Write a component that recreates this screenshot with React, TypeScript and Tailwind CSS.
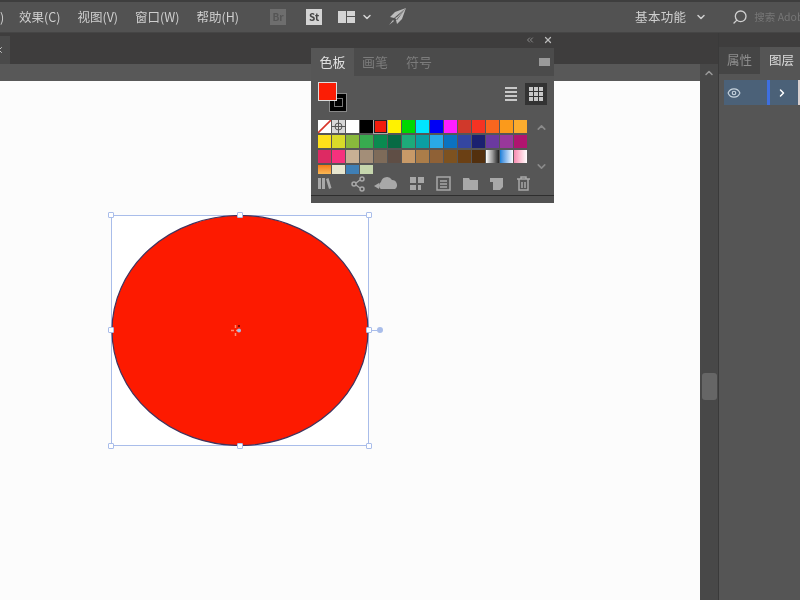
import { ChevronDown, ChevronRight, ChevronUp, ChevronsLeft, Eye, Search, X } from "lucide-react";

const cjk = { fontFamily: '"Noto Sans CJK SC", "Liberation Sans", sans-serif' };

const swatchRows = [
  ["none", "reg", "#ffffff", "#000000", "sel", "#fff200", "#00d800", "#00e5ff", "#0000f5", "#ff1eff", "#d0392b", "#f53323", "#f9661f", "#fb9a1b", "#fbac2e"],
  ["#fde01a", "#d9da29", "#8ab93c", "#38aa4f", "#0a8a50", "#076a44", "#1dab7a", "#0b9ea3", "#29a9e6", "#0b72c0", "#3446a1", "#1b2170", "#6b3aa0", "#99389b", "#b0146f"],
  ["#dd2a63", "#f6317d", "#c8b094", "#a38e78", "#7e6b59", "#5f4e45", "#c89a68", "#ab7d49", "#8f6136", "#7d5220", "#6b4014", "#53300e"],
];

const Swatch = ({ kind }: { kind: string }) => {
  if (kind === "none") {
    return (
      <svg className="w-[13px] h-[13px] bg-white" viewBox="0 0 13 13">
        <line x1="0" y1="13" x2="13" y2="0" stroke="#d8352a" strokeWidth="1.6" />
      </svg>
    );
  }
  if (kind === "reg") {
    return (
      <svg className="w-[13px] h-[13px] bg-[#d8d8d8]" viewBox="0 0 13 13" fill="none" stroke="#555">
        <circle cx="6.5" cy="6.5" r="3.5" />
        <path d="M0 6.5h13M6.5 0v13" />
      </svg>
    );
  }
  if (kind === "sel") {
    return (
      <div className="w-[13px] h-[13px] bg-[#f31c0c] border border-[#222] outline outline-1 outline-[#aaa]" />
    );
  }
  return <div className="w-[13px] h-[13px]" style={{ background: kind }} />;
};

const Handle = ({ className }: { className: string }) => (
  <div className={`absolute w-[6px] h-[6px] rounded-[1px] bg-white border border-[#a9bdea] ${className}`} />
);

const MenuItem = ({ label }: { label: string }) => (
  <span className="shrink-0 text-[12.5px] text-[#cfcfcf] whitespace-nowrap">{label}</span>
);

const iconClass = "w-[17px] h-[17px] text-[#a8a8a8]";

const SwatchesPanel = () => (
  <div className="absolute left-[311px] top-[48px] w-[243px] h-[155px] bg-[#565656] flex flex-col blur-[0.4px]" style={cjk}>
    <div className="h-[29px] bg-[#4b4b4b] flex items-center pr-[4px]">
      <div className="w-[43px] h-full bg-[#565656] flex items-center justify-center text-[13px] text-[#e0e0e0]">色板</div>
      <span className="ml-[8px] text-[13px] text-[#7c7c7c]">画笔</span>
      <span className="ml-[18px] text-[13px] text-[#7c7c7c]">符号</span>
      <div className="ml-auto w-[11px] h-[8px] bg-[#9a9a9a]" />
    </div>
    <div className="h-[36px] mt-[6px] pl-[7px] pr-[7px] flex justify-between">
      <div className="relative w-[36px] h-[30px]">
        <div className="absolute left-[11px] top-[11px] w-[18px] h-[19px] bg-black border border-[#888] flex items-center justify-center">
          <div className="w-[9px] h-[9px] border border-[#777]" />
        </div>
        <div className="absolute left-0 top-0 w-[19px] h-[19px] bg-[#fb1d05] border border-[#ddd]" />
      </div>
      <div className="flex items-start gap-[3px]">
        <div className="w-[22px] h-[22px] flex flex-col justify-center items-center gap-[2px] mt-[1px]">
          <div className="w-[12px] h-[2px] bg-[#c8c8c8]" />
          <div className="w-[12px] h-[2px] bg-[#c8c8c8]" />
          <div className="w-[12px] h-[2px] bg-[#c8c8c8]" />
          <div className="w-[12px] h-[2px] bg-[#c8c8c8]" />
        </div>
        <div className="w-[22px] h-[22px] bg-[#333] grid grid-cols-3 gap-[1px] p-[4px] mt-[1px]">
          {Array.from({ length: 9 }).map((_, i) => (
            <div key={i} className="bg-[#c8c8c8]" />
          ))}
        </div>
      </div>
    </div>
    <div className="flex pl-[7px] mt-[2px]">
      <div className="w-[210px] h-[54px] overflow-hidden flex flex-col gap-[2px]">
        {swatchRows.slice(0, 2).map((row, r) => (
          <div key={r} className="flex gap-[1px]">
            {row.map((c, i) => (
              <Swatch key={i} kind={c} />
            ))}
          </div>
        ))}
        <div className="flex gap-[1px]">
          {swatchRows[2].map((c, i) => (
            <Swatch key={i} kind={c} />
          ))}
          <div className="w-[13px] h-[13px] bg-gradient-to-r from-white via-[#999] to-[#222]" />
          <div className="w-[13px] h-[13px] bg-gradient-to-r from-[#0b7fd8] to-white" />
          <div className="w-[13px] h-[13px] bg-gradient-to-r from-[#f58ab0] to-white" />
        </div>
        <div className="flex gap-[1px]">
          <div className="w-[13px] h-[13px] bg-gradient-to-t from-[#f9d26a] to-[#f47a10]" />
          <div className="w-[13px] h-[13px] bg-[#e7e6cf]" />
          <div className="w-[13px] h-[13px] bg-[#3f7fb5]" />
          <div className="w-[13px] h-[13px] bg-[#c5d6ad]" />
        </div>
      </div>
      <div className="ml-[3px] w-[20px] flex flex-col justify-between items-center py-[1px] h-[54px]">
        <ChevronUp className="w-[13px] h-[13px] text-[#8a8a8a]" strokeWidth={3} />
        <ChevronDown className="w-[13px] h-[13px] text-[#8a8a8a]" strokeWidth={3} />
      </div>
    </div>
    <div className="h-[24px] flex items-center pl-[5px] mt-[-2px]">
      <svg className={iconClass} viewBox="0 0 17 17" fill="#a8a8a8">
        <path d="M2 3h3v11H2zM6 3h3v11H6zM10 4l2.5-1 3 10-2.5 1z" />
      </svg>
      <svg className={`${iconClass} ml-[17px]`} viewBox="0 0 17 17" fill="none" stroke="#a8a8a8" strokeWidth="1.5">
        <circle cx="4" cy="9" r="2" />
        <circle cx="12" cy="4" r="2" />
        <circle cx="12" cy="14" r="2" />
        <path d="M6 8l4-3M6 10l4 3" />
      </svg>
      <svg className="w-[26px] h-[17px] ml-[7px]" viewBox="0 0 26 17" fill="#a8a8a8">
        <path d="M7 14a4 4 0 0 1 0-7 6 6 0 0 1 11-2 5 5 0 0 1 3 9z" />
        <path d="M0 11l5-3v6z" />
      </svg>
      <svg className={`${iconClass} ml-[9px]`} viewBox="0 0 17 17" fill="#a8a8a8">
        <path d="M1 2h6v6H1zM9 2h6v6H9zM1 10h6v5H1zM9 10h3v5H9z" />
      </svg>
      <svg className={`${iconClass} ml-[9px]`} viewBox="0 0 17 17" fill="none" stroke="#a8a8a8" strokeWidth="1.5">
        <rect x="2" y="2" width="13" height="13" />
        <path d="M5 6h7M5 9h7M5 12h7" />
      </svg>
      <svg className={`${iconClass} ml-[10px]`} viewBox="0 0 17 17" fill="#a8a8a8">
        <path d="M1 3h6l1 2h8v10H1z" />
      </svg>
      <svg className={`${iconClass} ml-[9px]`} viewBox="0 0 17 17" fill="#a8a8a8">
        <path d="M2 3h13v9l-3 3H5v-8H2z" />
      </svg>
      <svg className={`${iconClass} ml-[10px]`} viewBox="0 0 17 17" fill="none" stroke="#a8a8a8" strokeWidth="1.5">
        <path d="M2 4h13M6 4V2h5v2M4 4v11h9V4M7 7v6M10 7v6" />
      </svg>
    </div>
    <div className="mt-auto h-[8px] border-t border-[#2e2e2e] bg-[#525252]" />
  </div>
);

const Canvas = () => (
  <div className="relative flex-1 bg-[#fcfcfc]">
    <div className="absolute left-[111px] top-[134px] w-[258px] h-[231px] bg-white border border-[#a9bdea]">
      <svg className="absolute left-[-1px] top-[-1px] w-[258px] h-[231px]" viewBox="0 0 258 231">
        <ellipse cx="129" cy="115.5" rx="128" ry="115" fill="#fd1a00" stroke="#40345e" strokeWidth="1.2" />
        <path d="M120 115.5h3M125 115.5h2M124.500 110v3M124.500 118v3" stroke="#ff8a6e" strokeWidth="1.5" />
        <circle cx="128" cy="115.5" r="2" fill="#a9bdea" />
        <circle cx="128" cy="111" r="1" fill="#5a0a00" />
      </svg>
    </div>
    <Handle className="left-[108px] top-[131px]" />
    <Handle className="left-[237px] top-[131px]" />
    <Handle className="left-[366px] top-[131px]" />
    <Handle className="left-[108px] top-[246px]" />
    <Handle className="left-[366px] top-[246px]" />
    <Handle className="left-[108px] top-[362px]" />
    <Handle className="left-[237px] top-[362px]" />
    <Handle className="left-[366px] top-[362px]" />
    <div className="absolute left-[372px] top-[249px] w-[5px] h-px bg-[#a9bdea]" />
    <div className="absolute left-[377px] top-[246px] w-[6px] h-[6px] rounded-full bg-[#a9bdea]" />
  </div>
);

export default function App() {
  return (
    <div className="relative w-[800px] h-[600px] overflow-hidden bg-[#555] flex flex-col" style={cjk}>
      <header className="h-[33px] bg-[#525252] flex items-center overflow-hidden border-t-2 border-t-[#3e3e3e] border-b border-b-[#454545] blur-[0.3px]">
        <span className="w-[19px] shrink-0 text-[12.5px] text-[#cfcfcf]">)</span>
        <div className="flex shrink-0 gap-[17px]">
          <MenuItem label="效果(C)" />
          <MenuItem label="视图(V)" />
          <MenuItem label="窗口(W)" />
          <MenuItem label="帮助(H)" />
        </div>
        <div className="shrink-0 ml-[31px] w-[16px] h-[16px] bg-[#6e6e6e] text-[10px] text-[#555] leading-[16px] text-center font-bold">Br</div>
        <div className="shrink-0 ml-[20px] w-[16px] h-[16px] bg-[#d4d4d4] text-[10px] text-[#444] leading-[16px] text-center font-bold">St</div>
        <div className="shrink-0 ml-[16px] w-[17px] h-[12px] flex gap-px">
          <div className="w-[8px] bg-[#d4d4d4]" />
          <div className="w-[8px] flex flex-col gap-px">
            <div className="h-[5px] bg-[#d4d4d4]" />
            <div className="flex-1 bg-[#d4d4d4]" />
          </div>
        </div>
        <ChevronDown className="shrink-0 ml-[6px] w-[12px] h-[12px] text-[#d4d4d4]" strokeWidth={3} />
        <svg className="shrink-0 ml-[15px] w-[18px] h-[18px]" viewBox="0 0 18 18" fill="#bdbdbd">
          <path d="M18 0L7 4 2 9l4 1zM18 0L9 9l-2 1 2 2zM18 0l-4 11-5 5-1-4zM1 17l4-5 1 1z" />
        </svg>
        <span className="shrink-0 ml-[229px] text-[12.5px] text-[#cfcfcf] tracking-[0.3px] whitespace-nowrap">基本功能</span>
        <ChevronDown className="shrink-0 ml-[9px] w-[12px] h-[12px] text-[#cfcfcf]" strokeWidth={3} />
        <Search className="shrink-0 ml-[25px] w-[16px] h-[16px] text-[#cfcfcf] -scale-x-100" />
        <span className="shrink-0 ml-[6px] text-[10.5px] text-[#777] whitespace-nowrap">搜索 Adobe</span>
      </header>
      <div className="flex-1 flex min-h-0">
        <main className="w-[719px] flex flex-col border-r border-[#3a3a3a]">
          <div className="h-[31px] bg-[#3e3d3d] flex items-start">
            <div className="w-[10px] h-[28px] mt-[3px] bg-[#4a4a4a] flex items-center overflow-hidden">
              <X className="-ml-[6px] w-[10px] h-[10px] text-[#ddd]" />
            </div>
            <div className="ml-auto mr-[165px] mt-[2px] flex items-center gap-[8px]">
              <ChevronsLeft className="w-[10px] h-[10px] text-[#999]" />
              <X className="w-[10px] h-[10px] text-[#bbb]" strokeWidth={3} />
            </div>
          </div>
          <div className="flex-1 flex min-h-0">
            <div className="flex-1 flex flex-col">
              <div className="h-[17px] bg-[#585858]" />
              <Canvas />
            </div>
            <div className="w-[18px] bg-[#484848] flex flex-col items-center">
              <ChevronUp className="mt-[3px] w-[12px] h-[12px] text-[#999]" strokeWidth={3} />
              <div className="mt-[294px] w-[15px] h-[27px] rounded-[3px] bg-[#666]" />
            </div>
          </div>
        </main>
        <aside className="flex-1 flex flex-col blur-[0.3px]">
          <div className="h-[14px] bg-[#3e3d3d]" />
          <div className="h-[27px] bg-[#454545] flex items-center">
            <span className="ml-[8px] text-[12.5px] text-[#8f8f8f] whitespace-nowrap">属性</span>
            <div className="ml-[8px] flex-1 h-full bg-[#555] flex items-center pl-[9px] text-[12.5px] text-[#dedede] whitespace-nowrap">图层</div>
          </div>
          <div className="flex-1 pt-[6px] pl-[5px]">
            <div className="h-[25px] bg-[#4b6178] flex items-center pl-[3px]">
              <Eye className="w-[14px] h-[14px] text-[#c6d2dc]" />
              <div className="ml-[26px] w-[3px] h-full bg-[#3e6fe0]" />
              <ChevronRight className="ml-[6px] w-[12px] h-[12px] text-white" strokeWidth={3} />
              <div className="ml-[10px] flex-1 h-full bg-[#d8d0d0]" />
            </div>
          </div>
        </aside>
      </div>
      <SwatchesPanel />
    </div>
  );
}
